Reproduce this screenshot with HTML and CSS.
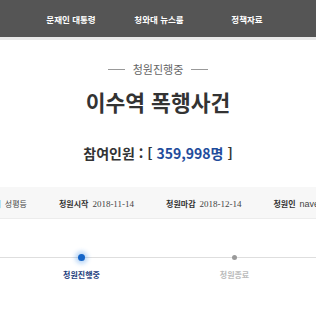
FILE: index.html
```html
<!DOCTYPE html>
<html lang="ko">
<head>
    <meta charset="UTF-8">
    <meta name="viewport" content="width=device-width, initial-scale=1.0">
    <title>국민청원 - 이수역 폭행사건</title>
    <link rel="stylesheet" href="styles.css">
</head>
<body>

    <div class="gnb">
        <ul class="gnb-list">
            <li>문재인 대통령</li>
            <li>청와대 뉴스룸</li>
            <li>정책자료</li>
            <li>국민청원</li>
        </ul>
    </div>

    <div class="petition-head">
        <p class="status"><span class="dash"></span>청원진행중<span class="dash"></span></p>
        <h1 class="title">이수역 폭행사건</h1>
        <p class="count">참여인원 : [ <span class="num">359,998명</span> ]</p>
    </div>

    <div class="info-bar">
        <ul class="info-list">
            <li><b>카테고리</b><span>성평등</span></li>
            <li><b>청원시작</b><span class="val">2018-11-14</span></li>
            <li><b>청원마감</b><span class="val">2018-12-14</span></li>
            <li><b>청원인</b><span class="val-en">naver - ***</span></li>
        </ul>
    </div>

    <div class="progress">
        <div class="step on">
            <div class="dot-wrap"><span class="dot"></span></div>
            <span class="step-name">청원진행중</span>
        </div>
        <div class="step">
            <div class="dot-wrap"><span class="dot"></span></div>
            <span class="step-name">청원종료</span>
        </div>
    </div>

</body>
</html>
```

FILE: styles.css
```css
* {
    margin: 0;
    padding: 0;
    box-sizing: border-box;
}

body {
    font-family: "Noto Sans CJK KR", "Noto Sans", sans-serif;
    background-color: #fff;
    color: #333;
    overflow: hidden;
}

ul {
    list-style: none;
}

/* 상단 메뉴 */
.gnb {
    background-color: #555;
    height: 40px;
    padding-top: 1px;
    border-bottom: 3px solid #e9e9e9;
}

.gnb-list {
    display: flex;
    padding-left: 27px;
    white-space: nowrap;
}

.gnb-list li {
    flex: 0 0 88px;
    text-align: center;
    color: #fff;
    font-size: 8.5px;
    font-weight: bold;
    line-height: 36px;
}

/* 청원 제목 */
.petition-head {
    text-align: center;
}

.status {
    margin-top: 21px;
    font-size: 11px;
    line-height: 16px;
    color: #666;
    display: flex;
    justify-content: center;
    align-items: center;
    gap: 8px;
}

.dash {
    display: block;
    width: 17px;
    height: 1px;
    background-color: #999;
}

.title {
    margin-top: 11px;
    font-size: 21.5px;
    line-height: 28px;
    font-weight: bold;
    color: #333;
}

.count {
    margin-top: 27px;
    font-size: 14px;
    line-height: 20px;
    font-weight: bold;
    color: #333;
}

.count .num {
    color: #1f4c9c;
}

/* 청원 정보 */
.info-bar {
    margin-top: 24px;
    height: 32px;
    padding-top: 3px;
    background-color: #f7f7f7;
    border-bottom: 1px solid #ececec;
    display: flex;
    justify-content: center;
    align-items: center;
}

.info-list {
    display: flex;
    justify-content: center;
    gap: 32px;
    white-space: nowrap;
    flex-shrink: 0;
    margin-left: -4px;
}

.info-list li {
    display: flex;
    align-items: baseline;
    gap: 4px;
    font-size: 8px;
    line-height: 12px;
    color: #444;
}

.info-list b {
    color: #333;
}

.info-list .val {
    font-family: "Liberation Serif", serif;
    font-size: 9px;
}

.info-list .val-en {
    font-family: "Liberation Sans", sans-serif;
    font-size: 9px;
}

/* 진행 단계 */
.progress {
    margin-top: 30px;
    display: flex;
    justify-content: center;
    background: linear-gradient(#dedede, #dedede) no-repeat 0 8px / 100% 1px;
}

.step {
    width: 153px;
    display: flex;
    flex-direction: column;
    align-items: center;
}

.dot-wrap {
    height: 16px;
    display: flex;
    align-items: center;
    justify-content: center;
}

.dot {
    display: block;
    width: 5px;
    height: 5px;
    border-radius: 50%;
    background-color: #9a9a9a;
}

.step.on .dot {
    width: 7px;
    height: 7px;
    background-color: #1565c8;
    box-shadow: 0 0 4px 3px rgba(40, 130, 230, 0.3);
}

.step-name {
    margin-top: 4px;
    font-size: 8px;
    line-height: 12px;
    font-weight: bold;
    color: #bbb;
}

.step.on .step-name {
    color: #1d3d7c;
}
```
